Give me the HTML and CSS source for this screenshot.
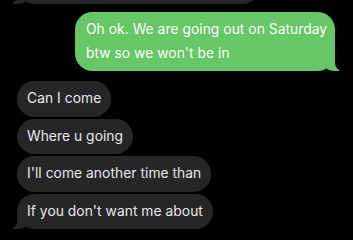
FILE: index.html
```html
<!DOCTYPE html>
<html>
<head>
<meta charset="utf-8">
<link rel="stylesheet" href="styles.css">
</head>
<body>
<div class="thread">
  <div class="bubble received tail prev" aria-hidden="true"></div>
  <div class="bubble sent tail">Oh ok. We are going out on Saturday btw so we won't be in</div>
  <div class="group">
    <div class="bubble received">Can I come</div>
    <div class="bubble received">Where u going</div>
    <div class="bubble received">I'll come another time than</div>
    <div class="bubble received tail">If you don't want me about</div>
  </div>
</div>
</body>
</html>
```
FILE: styles.css
```css
html, body {
  margin: 0;
  padding: 0;
  background: #000;
  height: 240px;
  overflow: hidden;
}
.thread {
  display: flex;
  flex-direction: column;
  padding: 0 18px 0 17px;
  font-family: Inter, "Liberation Sans", sans-serif;
  font-size: 13.8px;
  letter-spacing: 0.05px;
  line-height: 23.5px;
}
.group {
  display: flex;
  flex-direction: column;
  align-items: flex-start;
  gap: 2px;
  margin-top: 10px;
}
.bubble {
  position: relative;
  z-index: 0;
  padding: 6px 10px;
  border-radius: 17.5px;
  box-sizing: border-box;
}
.received {
  background: #262628;
  color: #e9e9eb;
  align-self: flex-start;
}
.sent {
  background: #67c666;
  color: #fff;
  align-self: flex-end;
  width: 260px;
  padding: 6px 4px 6px 11px;
  margin-top: 8px;
}
.prev {
  width: 243px;
  height: 36px;
  margin-top: -32px;
}
.tail::before,
.tail::after {
  content: "";
  position: absolute;
  bottom: 0;
  height: 18px;
}
.sent.tail::before {
  right: -4px;
  width: 18px;
  background: #67c666;
  border-bottom-left-radius: 14px 12px;
  z-index: -2;
}
.sent.tail::after {
  right: -20px;
  width: 20px;
  background: #000;
  border-bottom-left-radius: 8px;
  z-index: -1;
}
.received.tail::before {
  left: -4px;
  width: 18px;
  background: #262628;
  border-bottom-right-radius: 14px 12px;
  z-index: -2;
}
.received.tail::after {
  left: -20px;
  width: 20px;
  background: #000;
  border-bottom-right-radius: 8px;
  z-index: -1;
}
```
